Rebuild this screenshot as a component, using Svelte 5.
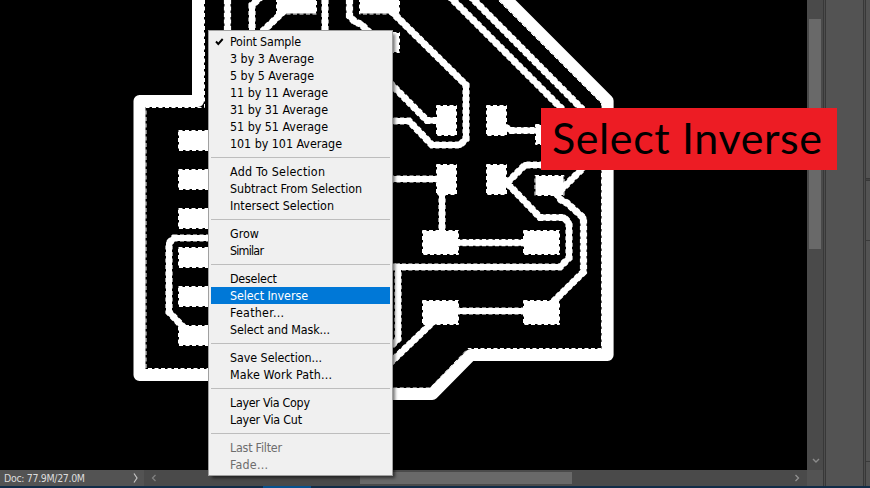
<script>
  const groups = [
    [['Point Sample', 71], ['3 by 3 Average', 84], ['5 by 5 Average', 84], ['11 by 11 Average', 98], ['31 by 31 Average', 98], ['51 by 51 Average', 98], ['101 by 101 Average', 112]],
    [['Add To Selection', 95], ['Subtract From Selection', 132], ['Intersect Selection', 104]],
    [['Grow', 29], ['Similar', 34]],
    [['Deselect', 47], ['Select Inverse', 78], ['Feather...', 54], ['Select and Mask...', 100]],
    [['Save Selection...', 92], ['Make Work Path...', 102]],
    [['Layer Via Copy', 80], ['Layer Via Cut', 72]],
    [['Last Filter', 52], ['Fade...', 38]]
  ];
  const disabled = ['Last Filter', 'Fade...'];

  // [x, y, width, height]
  const pads = [
    [277, -4, 39, 17.5], [360, -4, 39, 17.5], [380, 33, 19, 19],
    [437, 106, 19, 29], [487, 106, 19, 29], [536, 125, 29, 19],
    [437, 165, 19, 29], [487, 165, 19, 29], [535.5, 176, 28, 19],
    [423, 231, 35, 23], [524, 231, 35, 23], [423, 301, 35, 23], [524, 301, 35, 23],
    [179, 131, 40, 19], [179, 170, 40, 19], [179, 209, 40, 19],
    [179, 248, 40, 19], [179, 287, 40, 19], [179, 326, 40, 19]
  ];
  const traces = [
    'M227.5 0V40', 'M262 -4L252 5V40', 'M284 11L262 32', 'M325 0V40',
    'M349.5 0V16L355 22L361 24L370 33',
    'M391 11L466 85V139L460 145H432L409 121H380',
    'M390 83L427 120.5H438',
    'M505 127L511 130.5H540',
    'M449 -4L566 113', 'M470 -4L586 113',
    'M586 165L561 190', 'M550 165H525L507 183L540 217.5H564L569 223V258L560 267H398V339L388 349',
    'M392 267H400', 'M390 179H438', 'M442 192V232',
    'M556 193L561 200L567 203L583.5 218V272L553 302',
    'M456 242.7H526', 'M456 311H526', 'M435 320L388 365',
    'M210 238H174L169 243V312L184 328'
  ];

  function fit(node, width) {
    const span = node.getBoundingClientRect().width;
    node.style.letterSpacing = `${(width - span) / (node.textContent.length - 1)}px`;
  }
</script>

<div class="app">
  <div class="workspace">
    <svg class="canvas" width="807" height="470" viewBox="0 0 807 470">
      <rect width="807" height="470" fill="#000" />
      <g fill="none" stroke="#fff">
        <path d="M198 -6V101H139.5V375H300L319 394H432.3L470.8 355H607.6V100.8L499 -8" stroke-width="12" stroke-linejoin="round" />
        <path d="M204.5 0V107.5H146V368.5H303L322 388H430L468 348.5H601.5V103.5L498.3 0.3" stroke-dasharray="4 2.5" />
        {#each traces as d}
          <path {d} stroke-width="7.2" stroke-dasharray="4 2.5" />
          <path {d} stroke-width="6" stroke-linejoin="round" />
        {/each}
        {#each pads as [x, y, width, height]}
          <rect {x} {y} {width} {height} fill="#fff" stroke="none" />
          <rect x={x - 0.5} y={y - 0.5} width={width + 1} height={height + 1} stroke-dasharray="4 2.5" />
        {/each}
      </g>
    </svg>
    <div class="vscroll">
      <div class="vthumb"></div>
      <svg width="8" height="6" viewBox="0 0 8 6"><path d="M1 1L4 4L7 1" fill="none" stroke="#8b8b8b" stroke-width="1.4" /></svg>
    </div>
    <div class="gutter"></div>
    <div class="dock"></div>
    <div class="gutter"></div>
    <div class="panels"><i class="a"></i><i class="b"></i><i class="c"></i></div>
  </div>

  <div class="bottom">
    <div class="status">
      <span use:fit={81}>Doc: 77.9M/27.0M</span>
      <svg width="6" height="10" viewBox="0 0 6 10"><path d="M1 .5L4 5L1 9.5" fill="none" stroke="#c4c4c4" stroke-width="1.2" /></svg>
    </div>
    <div class="hscroll">
      <svg width="6" height="8" viewBox="0 0 6 8"><path d="M4.5 1L1.5 4L4.5 7" fill="none" stroke="#818181" stroke-width="1.3" /></svg>
      <div class="hthumb"></div>
      <svg width="6" height="8" viewBox="0 0 6 8"><path d="M1.5 1L4.5 4L1.5 7" fill="none" stroke="#929292" stroke-width="1.3" /></svg>
    </div>
    <div class="corner"></div>
    <div class="gutter"></div>
    <div class="dock"></div>
    <div class="gutter"></div>
    <div class="panels"></div>
  </div>
  <div class="taskbar"><div class="task"></div></div>

  <div class="menu">
    {#each groups as group, g}
      {#if g > 0}<div class="sep"></div>{/if}
      {#each group as [label, width]}
        <div class="item" class:active={label === 'Select Inverse'} class:disabled={disabled.includes(label)}>
          <div class="mark">
            {#if label === 'Point Sample'}
              <svg width="9" height="8" viewBox="0 0 9 8"><path d="M1 3.5L3.3 6L7.7 1" fill="none" stroke="#000" stroke-width="1.9" /></svg>
            {/if}
          </div>
          <span use:fit={width}>{label}</span>
        </div>
      {/each}
    {/each}
  </div>

  <div class="callout"><span use:fit={270}>Select Inverse</span></div>
</div>

<style>
  .app {
    position: relative;
    width: 870px;
    height: 488px;
    overflow: hidden;
    display: flex;
    flex-direction: column;
    background: #535353;
    font-family: "DejaVu Sans Condensed", "DejaVu Sans", sans-serif;
    font-stretch: condensed;
  }
  span { white-space: pre; }
  .workspace { display: flex; height: 470px; }
  svg { display: block; flex: none; }
  .vscroll {
    width: 16px;
    box-sizing: border-box;
    padding: 19px 2px 6px;
    display: flex;
    flex-direction: column;
    align-items: flex-start;
    justify-content: space-between;
    background: #4a4a4a;
  }
  .vscroll svg { margin-left: 3px; }
  .vthumb { width: 12px; height: 230px; background: #696969; }
  .gutter {
    width: 3px;
    box-sizing: border-box;
    border: solid #383838;
    border-width: 0 1px;
    background: #4d4d4d;
  }
  .dock { width: 37px; background: #535353; }
  .panels { width: 4px; display: flex; flex-direction: column; }
  .panels i { display: block; flex: none; background: #3a3a3a; height: 1px; }
  .panels .a { margin-top: 178px; height: 3px; background: #434343; border: solid #383838; border-width: 1px 0; box-sizing: border-box; }
  .panels .b { margin-top: 59px; }
  .panels .c { margin-top: 220px; }
  .bottom { display: flex; height: 16px; }
  .status {
    width: 144px;
    box-sizing: border-box;
    padding: 0 5px 0 4px;
    display: flex;
    align-items: center;
    justify-content: space-between;
    background: #535353;
    color: #dcdcdc;
    font-size: 10.5px;
    line-height: 18px;
  }
  .hscroll {
    width: 663px;
    box-sizing: border-box;
    padding: 0 7px;
    display: flex;
    align-items: center;
    background: #4a4a4a;
  }
  .hthumb { width: 212px; height: 12px; margin: 0 auto 0 203px; background: #696969; }
  .corner { width: 16px; background: #535353; }
  .taskbar { height: 2px; background: #112c47; padding-left: 263px; }
  .task { width: 48px; height: 2px; background: #07528f; }
  .menu {
    position: absolute;
    left: 208px;
    top: 30px;
    width: 185px;
    height: 446px;
    box-sizing: border-box;
    padding: 2px;
    border: 1px solid #a0a0a0;
    background: #f0f0f0;
    box-shadow: 3px 3px 3px -1px rgba(0, 0, 0, 0.55);
    font-size: 12.4px;
    line-height: 18px;
    color: #000;
  }
  .item { display: flex; height: 17px; }
  .mark { width: 19px; box-sizing: border-box; padding: 5px 0 0 4px; flex: none; }
  .active { background: #0078d7; color: #fff; }
  .disabled { color: #6d6d6d; }
  .sep { height: 1px; margin: 5px 0; background: #bdbdbd; }
  .callout {
    position: absolute;
    left: 541px;
    top: 108px;
    width: 296px;
    height: 62px;
    box-sizing: border-box;
    padding-left: 11px;
    background: #ed1c24;
    color: #000;
    font-family: Lato, sans-serif;
    font-size: 43px;
    line-height: 60px;
  }
</style>
